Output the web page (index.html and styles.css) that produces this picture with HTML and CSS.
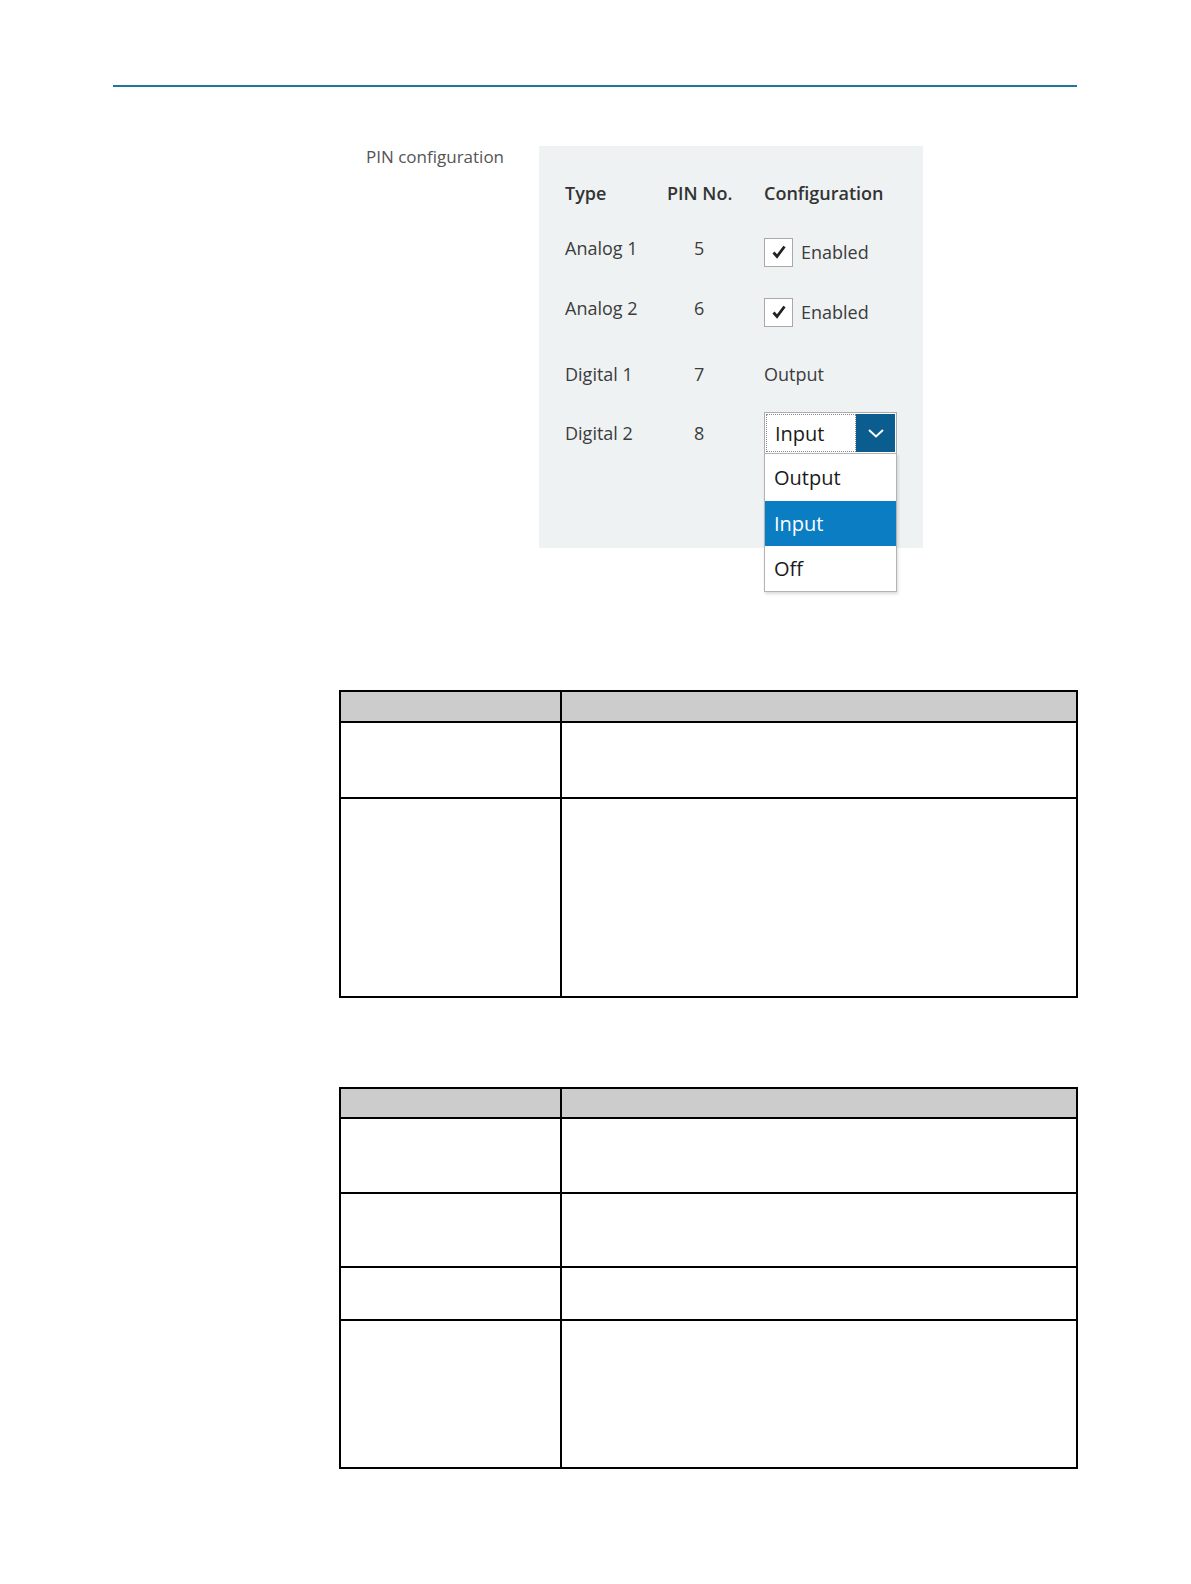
FILE: index.html
```html
<!DOCTYPE html>
<html>
<head>
    <title>PIN configuration</title>
    <link rel="stylesheet" href="styles.css">
</head>
<body>
    <div class="page">
        <div class="rule"></div>

        <div class="config">
            <div class="config-label">PIN configuration</div>
            <div class="panel">
                <div class="grid">
                    <div class="head">Type</div>
                    <div class="head pin">PIN No.</div>
                    <div class="head">Configuration</div>

                    <div class="cell">Analog 1</div>
                    <div class="cell pin">5</div>
                    <div class="cell check-cell">
                        <span class="checkbox">
                            <svg width="16" height="16" viewBox="0 0 16 16"><path d="M2.5 8.5 L6 12.5 L13.5 2.5" fill="none" stroke="#222" stroke-width="2.8"/></svg>
                        </span>
                        Enabled
                    </div>

                    <div class="cell">Analog 2</div>
                    <div class="cell pin">6</div>
                    <div class="cell check-cell">
                        <span class="checkbox">
                            <svg width="16" height="16" viewBox="0 0 16 16"><path d="M2.5 8.5 L6 12.5 L13.5 2.5" fill="none" stroke="#222" stroke-width="2.8"/></svg>
                        </span>
                        Enabled
                    </div>

                    <div class="cell">Digital 1</div>
                    <div class="cell pin">7</div>
                    <div class="cell">Output</div>

                    <div class="cell">Digital 2</div>
                    <div class="cell pin">8</div>
                    <div class="cell">
                        <div class="select">
                            <div class="select-value">Input</div>
                            <div class="select-btn">
                                <svg width="18" height="12" viewBox="0 0 18 12"><path d="M2 3 L9 9.5 L16 3" fill="none" stroke="#fff" stroke-width="2"/></svg>
                            </div>
                            <ul class="options">
                                <li>Output</li>
                                <li class="selected">Input</li>
                                <li>Off</li>
                            </ul>
                        </div>
                    </div>
                </div>
            </div>
        </div>

        <table class="spec spec-one">
            <tr class="th"><td class="c1"></td><td></td></tr>
            <tr class="r76"><td class="c1"></td><td></td></tr>
            <tr class="r199"><td class="c1"></td><td></td></tr>
        </table>

        <table class="spec spec-two">
            <tr class="th"><td class="c1"></td><td></td></tr>
            <tr class="r75"><td class="c1"></td><td></td></tr>
            <tr class="r74"><td class="c1"></td><td></td></tr>
            <tr class="r53"><td class="c1"></td><td></td></tr>
            <tr class="r148"><td class="c1"></td><td></td></tr>
        </table>
    </div>
</body>
</html>
```

FILE: styles.css
```css
body {
    margin: 0;
    background-color: #fff;
    font-family: "Open Sans", "Noto Sans", sans-serif;
}
.page {
    padding-top: 85px;
    padding-bottom: 100px;
}
.rule {
    margin-left: 113px;
    width: 964px;
    height: 2px;
    background-color: #1f7896;
}
.config {
    display: flex;
    margin-top: 59px;
    padding-left: 366px;
}
.config-label {
    width: 173px;
    font-size: 17px;
    color: #555;
    line-height: 22px;
}
.panel {
    width: 384px;
    height: 402px;
    background-color: #eef2f3;
    box-sizing: border-box;
    padding-top: 19px;
    padding-left: 26px;
}
.grid {
    display: grid;
    grid-template-columns: 102px 97px 1fr;
    grid-template-rows: 56px 54px 66px 66px 52px;
    color: #3c3c3c;
    font-size: 18px;
}
.head {
    display: flex;
    align-items: center;
    font-weight: 600;
    color: #333;
}
.cell {
    display: flex;
    align-items: center;
}
.cell.pin {
    padding-left: 27px;
}
.check-cell {
    padding-top: 8px;
}
.checkbox {
    display: inline-flex;
    align-items: center;
    justify-content: center;
    width: 29px;
    height: 29px;
    background-color: #fff;
    border: 1px solid #a9a9a9;
    box-sizing: border-box;
    margin-right: 8px;
}
.select {
    position: relative;
    display: flex;
    width: 133px;
    height: 42px;
    box-sizing: border-box;
    border: 1px solid #adadad;
    background-color: #fff;
    padding: 1px;
}
.select-value {
    flex: 1;
    border: 1px dotted #888;
    font-size: 20px;
    color: #1a1a1a;
    padding-left: 8px;
    display: flex;
    align-items: center;
}
.select-btn {
    width: 39px;
    background-color: #0b5d8f;
    display: flex;
    align-items: center;
    justify-content: center;
}
.options {
    position: absolute;
    left: -1px;
    top: 40px;
    width: 133px;
    margin: 0;
    padding: 0;
    list-style: none;
    background-color: #fff;
    border: 1px solid #b3b3b3;
    box-sizing: border-box;
    box-shadow: 1px 2px 3px rgba(0,0,0,0.15);
}
.options li {
    height: 45px;
    line-height: 45px;
    padding-left: 9px;
    font-size: 20px;
    color: #1a1a1a;
}
.options li:first-child {
    height: 47px;
    line-height: 47px;
}
.options li.selected {
    background-color: #0a7dc3;
    color: #fff;
}
.spec {
    border-collapse: collapse;
    width: 739px;
    margin-left: 339px;
}
.spec td {
    border: 2px solid #000;
    padding: 0;
}
.spec td.c1 {
    width: 219px;
}
.spec tr.th td {
    background-color: #cccccc;
    height: 29px;
}
.spec-one {
    margin-top: 142px;
}
.spec-two {
    margin-top: 89px;
}
.spec-two tr.th td {
    height: 28px;
}
.r76 td { height: 74px; }
.r75 td { height: 73px; }
.r74 td { height: 72px; }
.r53 td { height: 51px; }
.r148 td { height: 146px; }
.r199 td { height: 197px; }
```
